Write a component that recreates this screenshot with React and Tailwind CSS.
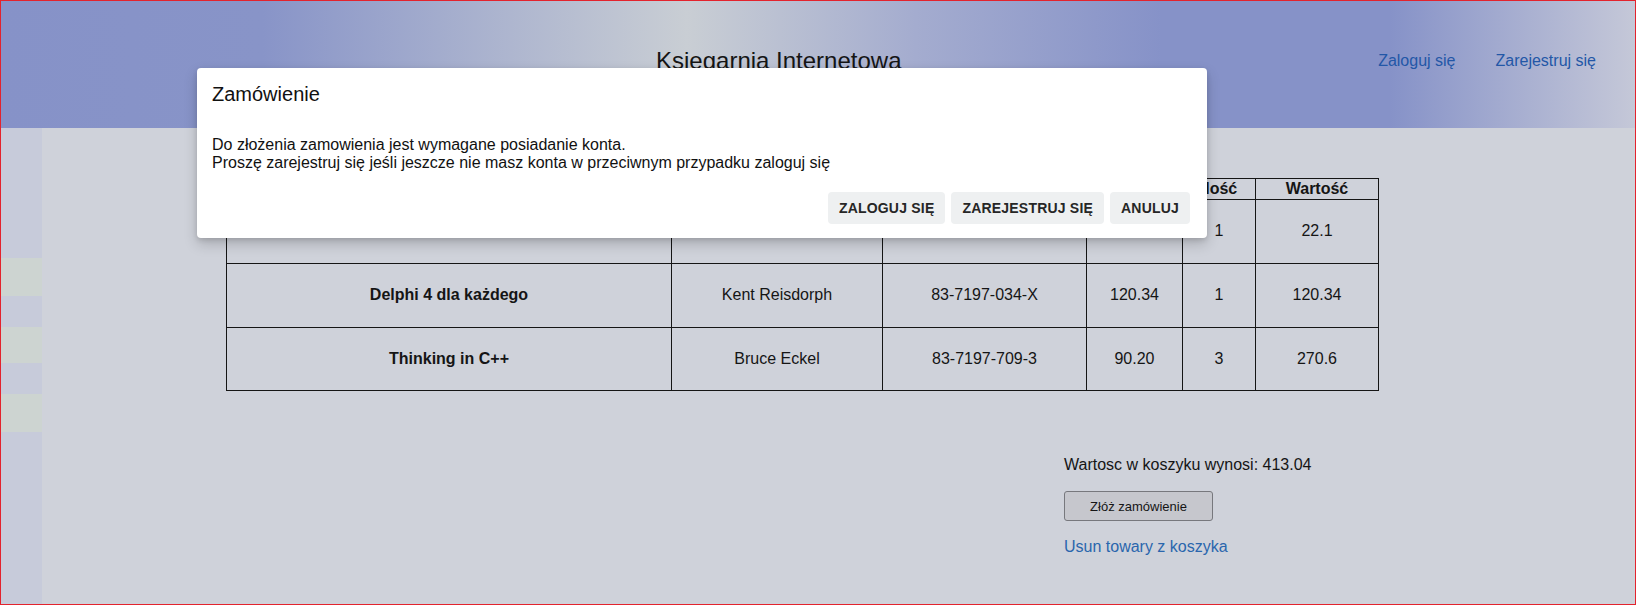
import React from 'react';

const menuRows = [
  { h: 'h-[130px]', bg: 'bg-[#c7cbda]' },
  { h: 'h-[38px]', bg: 'bg-[#cdd4d1]' },
  { h: 'h-[31px]', bg: 'bg-[#c7cbda]' },
  { h: 'h-[36px]', bg: 'bg-[#cdd4d1]' },
  { h: 'h-[31px]', bg: 'bg-[#c7cbda]' },
  { h: 'h-[38px]', bg: 'bg-[#cdd4d1]' },
  { h: 'flex-1', bg: 'bg-[#c7cbda]' },
];

const cartItems = [
  { title: 'Turbo Pascal 7.0', author: 'Tomasz Kubiak', isbn: '83-7197-001-1', price: '22.10', qty: 1, value: '22.1' },
  { title: 'Delphi 4 dla każdego', author: 'Kent Reisdorph', isbn: '83-7197-034-X', price: '120.34', qty: 1, value: '120.34' },
  { title: 'Thinking in C++', author: 'Bruce Eckel', isbn: '83-7197-709-3', price: '90.20', qty: 3, value: '270.6' },
];

const headers = ['Tytuł', 'Autor', 'ISBN', 'Cena', 'Ilość', 'Wartość'];

const cell = 'border border-[#151515] p-0 text-center align-middle';

const App = () => {
  return (
    <div
      className="relative w-[1636px] h-[605px] overflow-hidden border border-[#e3232d] bg-[#cfd2da] text-[#151515] flex flex-col"
      style={{ fontFamily: '"Liberation Sans", Arial, sans-serif' }}
    >
      {/* header */}
      <header className="h-[127px] shrink-0 flex items-center pb-[7px] bg-[linear-gradient(90deg,#8692c8_0%,#8894c8_16%,#c9ced4_42%,#a4accf_56%,#8692c8_71%,#8692c8_85%,#c5c8d8_100%)]">
        <h1 className="ml-[655px] text-[24px] leading-[1.15] font-normal">Ksiegarnia Internetowa</h1>
        <nav className="ml-auto mr-[39px] flex gap-[40px] text-[16px] text-[#2357a7]">
          <a href="#">Zaloguj się</a>
          <a href="#">Zarejestruj się</a>
        </nav>
      </header>

      <div className="flex flex-1">
        {/* left menu */}
        <aside className="w-[41px] flex flex-col">
          {menuRows.map((row, i) => (
            <div key={i} className={`${row.h} ${row.bg}`} />
          ))}
        </aside>

        <main className="flex-1 pl-[184px] pt-[50px]">
          <table className="border-collapse table-fixed w-[1152px] text-[16px] leading-[1.15]">
            <colgroup>
              <col className="w-[445px]" />
              <col className="w-[211px]" />
              <col className="w-[204px]" />
              <col className="w-[96px]" />
              <col className="w-[73px]" />
              <col className="w-[123px]" />
            </colgroup>
            <thead>
              <tr className="h-[21px]">
                {headers.map((h) => (
                  <th key={h} className={`${cell} font-bold`}>{h}</th>
                ))}
              </tr>
            </thead>
            <tbody>
              {cartItems.map((item, i) => (
                <tr key={item.isbn} className={i === 2 ? 'h-[63px]' : 'h-[64px]'}>
                  <td className={`${cell} font-bold`}>{item.title}</td>
                  <td className={cell}>{item.author}</td>
                  <td className={cell}>{item.isbn}</td>
                  <td className={cell}>{item.price}</td>
                  <td className={cell}>{item.qty}</td>
                  <td className={cell}>{item.value}</td>
                </tr>
              ))}
            </tbody>
          </table>

          <div className="ml-[838px] mt-[65px] flex flex-col items-start">
            <p className="text-[16px] leading-[1.15]">Wartosc w koszyku wynosi: 413.04</p>
            <button className="mt-[17px] w-[149px] h-[30px] rounded-[3px] border border-[#77787d] bg-[#c6c7cd] text-[13px] text-[#151515]">
              Złóż zamówienie
            </button>
            <a href="#" className="mt-[17px] text-[16px] leading-[1.15] text-[#2a66ad]">
              Usun towary z koszyka
            </a>
          </div>
        </main>
      </div>

      {/* dialog */}
      <div className="absolute left-[196px] top-[67px] w-[1010px] h-[170px] bg-white rounded-[4px] shadow-[0_6px_14px_rgba(0,0,0,0.18),0_2px_5px_rgba(0,0,0,0.12)] px-[15px] pt-[15px] flex flex-col">
        <h2 className="text-[20px] leading-[23px] font-normal text-[#111]">Zamówienie</h2>
        <div className="mt-[30px] text-[16px] leading-[1.15] text-[#111]">
          <p>Do złożenia zamowienia jest wymagane posiadanie konta.</p>
          <p>Proszę zarejestruj się jeśli jeszcze nie masz konta w przeciwnym przypadku zaloguj się</p>
        </div>
        <div className="mt-auto mb-[14px] mr-[2px] flex justify-end gap-[6px]">
          {['ZALOGUJ SIĘ', 'ZAREJESTRUJ SIĘ', 'ANULUJ'].map((label) => (
            <button
              key={label}
              className="h-[32px] px-[11px] rounded-[4px] bg-[#eef0f1] text-[14px] font-bold tracking-[0.2px] text-[#262626]"
            >
              {label}
            </button>
          ))}
        </div>
      </div>
    </div>
  );
};

export default App;
